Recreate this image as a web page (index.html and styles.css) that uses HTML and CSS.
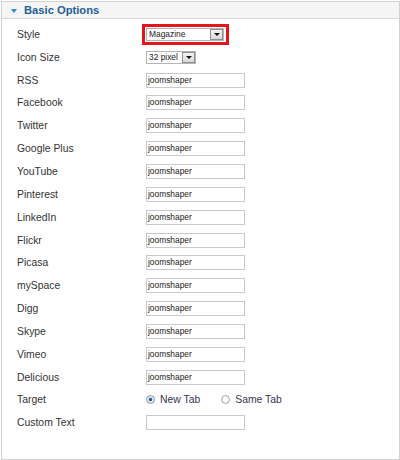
FILE: index.html
```html
<!DOCTYPE html>
<html>
<head>
<meta charset="utf-8">
<link rel="stylesheet" href="styles.css">
</head>
<body>
<div class="panel">
  <div class="header">
    <span class="tri"></span>
    <span class="title">Basic Options</span>
  </div>
  <div class="rows">
    <div class="row"><span class="label">Style</span>
      <div class="field"><div class="hilite"><div class="select wide"><span class="val">Magazine</span><span class="btn"><span class="arrow"></span></span></div></div></div>
    </div>
    <div class="row"><span class="label">Icon Size</span>
      <div class="field"><div class="select narrow"><span class="val">32 pixel</span><span class="btn"><span class="arrow"></span></span></div></div>
    </div>
    <div class="row"><span class="label">RSS</span><div class="field"><div class="input">joomshaper</div></div></div>
    <div class="row"><span class="label">Facebook</span><div class="field"><div class="input">joomshaper</div></div></div>
    <div class="row"><span class="label">Twitter</span><div class="field"><div class="input">joomshaper</div></div></div>
    <div class="row"><span class="label">Google Plus</span><div class="field"><div class="input">joomshaper</div></div></div>
    <div class="row"><span class="label">YouTube</span><div class="field"><div class="input">joomshaper</div></div></div>
    <div class="row"><span class="label">Pinterest</span><div class="field"><div class="input">joomshaper</div></div></div>
    <div class="row"><span class="label">LinkedIn</span><div class="field"><div class="input">joomshaper</div></div></div>
    <div class="row"><span class="label">Flickr</span><div class="field"><div class="input">joomshaper</div></div></div>
    <div class="row"><span class="label">Picasa</span><div class="field"><div class="input">joomshaper</div></div></div>
    <div class="row"><span class="label">mySpace</span><div class="field"><div class="input">joomshaper</div></div></div>
    <div class="row"><span class="label">Digg</span><div class="field"><div class="input">joomshaper</div></div></div>
    <div class="row"><span class="label">Skype</span><div class="field"><div class="input">joomshaper</div></div></div>
    <div class="row"><span class="label">Vimeo</span><div class="field"><div class="input">joomshaper</div></div></div>
    <div class="row"><span class="label">Delicious</span><div class="field"><div class="input">joomshaper</div></div></div>
    <div class="row"><span class="label">Target</span>
      <div class="field radios">
        <span class="radio checked"></span><span class="rlabel">New Tab</span>
        <span class="radio second"></span><span class="rlabel">Same Tab</span>
      </div>
    </div>
    <div class="row"><span class="label">Custom Text</span><div class="field"><div class="input empty"></div></div></div>
  </div>
</div>
</body>
</html>
```

FILE: styles.css
```css
html, body {
  margin: 0;
  padding: 0;
  background: #ffffff;
}
body {
  font-family: "Liberation Sans", Arial, sans-serif;
  color: #333333;
}
.panel {
  box-sizing: border-box;
  margin: 1px 0 0 1px;
  width: 399px;
  height: 459px;
  border: 1px solid #d2d2d2;
  background: #ffffff;
}
.header {
  box-sizing: border-box;
  height: 17px;
  background: #f5f5f5;
  border-bottom: 1px solid #dadada;
  display: flex;
  align-items: center;
  padding-left: 9px;
}
.tri {
  width: 0;
  height: 0;
  border-left: 3px solid transparent;
  border-right: 3px solid transparent;
  border-top: 4px solid #2b8bcc;
  margin-right: 7px;
  margin-top: 1px;
}
.title {
  font-size: 11.2px;
  font-weight: bold;
  color: #1f5f99;
}
.rows {
  padding-top: 4px;
}
.row {
  height: 22.85px;
  display: flex;
  align-items: center;
}
.label {
  width: 129px;
  padding-left: 15px;
  font-size: 10.4px;
  color: #333333;
}
.field {
  display: flex;
  align-items: center;
}
.input {
  box-sizing: border-box;
  width: 99px;
  height: 15px;
  border: 1px solid #c9c9c9;
  font-size: 8.4px;
  line-height: 13px;
  padding-left: 1px;
  color: #222222;
}
.hilite {
  margin-left: -4px;
  box-sizing: border-box;
  width: 87px;
  height: 21px;
  border: 3px solid #e8141c;
  display: flex;
  align-items: center;
  padding-left: 1px;
}
.select {
  box-sizing: border-box;
  height: 13px;
  border: 1px solid #b5b5b5;
  display: flex;
  align-items: center;
  justify-content: space-between;
  background: #fff;
}
.select.wide {
  width: 78px;
}
.select.narrow {
  width: 50px;
}
.val {
  font-size: 8.4px;
  padding-left: 2px;
  color: #222222;
}
.btn {
  box-sizing: border-box;
  width: 13px;
  height: 11px;
  border: 1px solid #8f8f8f;
  background: linear-gradient(#f4f4f4, #d8d8d8);
  display: flex;
  align-items: center;
  justify-content: center;
}
.arrow {
  width: 0;
  height: 0;
  border-left: 3px solid transparent;
  border-right: 3px solid transparent;
  border-top: 3px solid #111;
}
.radios .radio {
  box-sizing: border-box;
  width: 9px;
  height: 9px;
  border-radius: 50%;
  border: 1px solid #a8a8a8;
  background: radial-gradient(circle, #ffffff 30%, #e4e4e4 100%);
}
.radios .radio.checked {
  background: radial-gradient(circle, #1b4f7a 0, #2e77ad 30%, #e8eef3 45%, #dcdcdc 100%);
  border-color: #8a9aa8;
}
.radios .radio.second {
  margin-left: 21px;
}
.rlabel {
  font-size: 10.4px;
  margin-left: 5px;
  color: #3a3550;
}
```
